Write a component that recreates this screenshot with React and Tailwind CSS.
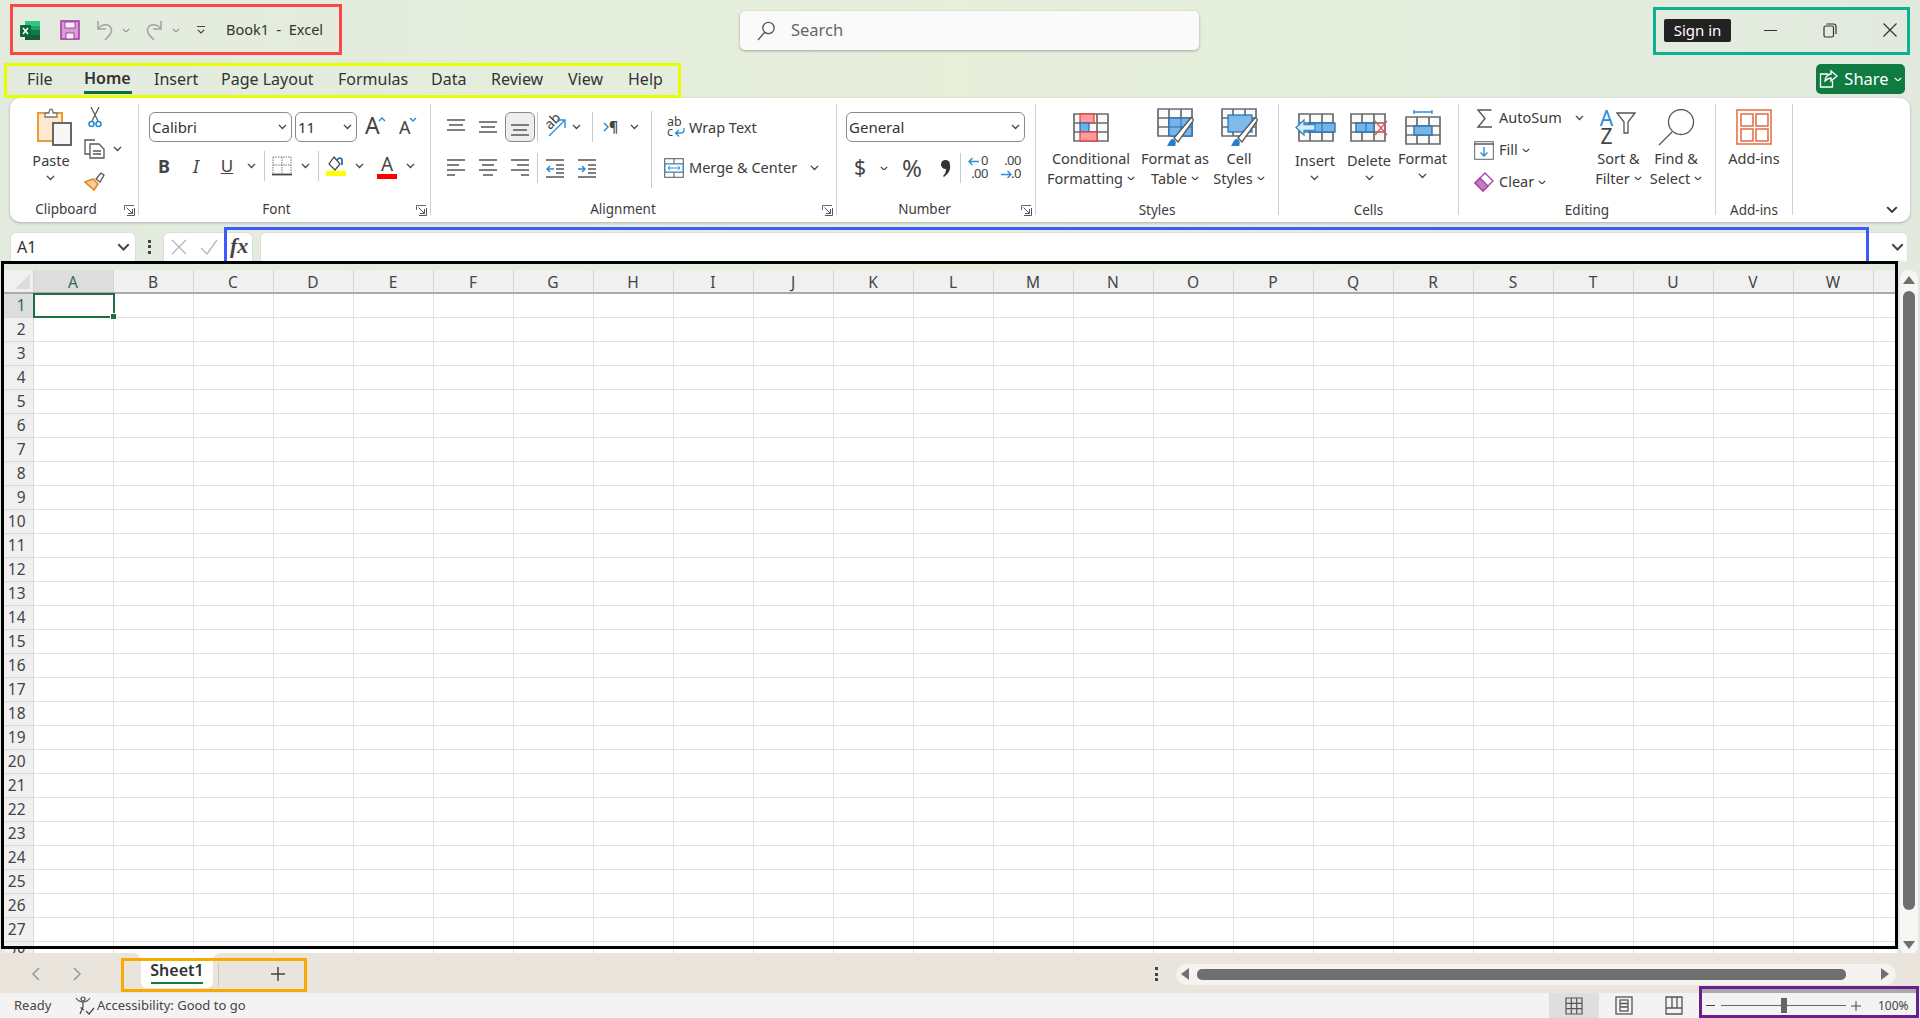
import React from 'react';

const COLS = 'ABCDEFGHIJKLMNOPQRSTUVW'.split('');
const ROWS = Array.from({ length: 28 }, (_, i) => i + 1);

const Chev = ({ c = '#444', w = 9 }) => (
  <svg width={w} height={w * 0.6} viewBox="0 0 10 6" fill="none"><path d="M1 1l4 4 4-4" stroke={c} strokeWidth="1.5" /></svg>
);

// cell that centres one thing in a fixed width
const Cell = ({ className, children }) => <div className={`flex items-center justify-center shrink-0 ${className}`}>{children}</div>;

const Sep = ({ className = 'h-[30px]' }) => <div className={`w-px shrink-0 bg-[#c9c9c9] ${className}`} />;

const Launcher = () => (
  <svg width="11" height="11" viewBox="0 0 11 11" fill="none" className="shrink-0">
    <path d="M.5 5V.5H10M.5 .5" stroke="#666" /><path d="M2.5 2.5l6 6M4 8.5h4.5V4M10.5 3v7.5H3" stroke="#555" />
  </svg>
);

function Group({ className, label, labelClass = '', launcher, low, children }) {
  return (
    <div className={`shrink-0 h-[111px] flex flex-col border-r border-[#cfcfcf] ${className}`}>
      <div className="h-[97px] shrink-0">{children}</div>
      <div className={`flex items-center h-[18px] shrink-0 ${low ? 'mt-[1px]' : ''}`}>
        <span className={`flex-1 text-center text-[13.5px] text-[#3b3b3b] leading-none ${labelClass}`}>{label}</span>
        {launcher && <div className="mr-[3px] ml-[2px]"><Launcher /></div>}
      </div>
    </div>
  );
}

function Big({ className, icon, lines, caretOnly, low }) {
  return (
    <div className={`shrink-0 flex flex-col items-center pt-[4px] ${className}`}>
      <div className="h-[38px] flex items-center justify-center">{icon}</div>
      <div className={`${low ? 'mt-[4px]' : 'mt-[2px]'} text-[14.5px] leading-[20px] text-[#3b3b3b] text-center whitespace-nowrap`}>
        {lines.map((l, i) => (
          <div key={i} className="flex items-center justify-center gap-[4px]">
            {l}
            {!caretOnly && i === lines.length - 1 && <Chev w={8} />}
          </div>
        ))}
        {caretOnly && <div className="flex justify-center h-[16px] items-center"><Chev /></div>}
      </div>
    </div>
  );
}

const Combo = ({ className, text }) => (
  <div className={`h-[30px] shrink-0 flex items-center justify-between pl-[2px] pr-[4px] border border-[#8a8a8a] rounded-[6px] ${className}`}>
    <span className="text-[15px] text-[#333]">{text}</span>
    <Chev />
  </div>
);

const Lines = ({ rows, c = '#555' }) => (
  <svg width="19" height="19" viewBox="0 0 19 19" fill="none" stroke={c} strokeWidth="1.5">
    {rows.map((d, i) => <path key={i} d={d} />)}
  </svg>
);

/* ---- drawn icons ---- */
const ExcelLogo = () => (
  <svg width="21" height="21" viewBox="0 0 21 21">
    <rect x="5" y="1" width="15" height="19" rx="1.5" fill="#21a366" />
    <rect x="5" y="1" width="15" height="5" fill="#33c481" />
    <rect x="5" y="10" width="15" height="5" fill="#107c41" />
    <rect x="5" y="15" width="15" height="5" fill="#185c37" />
    <rect x="0" y="5" width="11" height="12" rx="1" fill="#0b6a38" />
    <path d="M3 8l5 6M8 8l-5 6" stroke="#fff" strokeWidth="1.6" />
  </svg>
);
const Save = () => (
  <svg width="20" height="20" viewBox="0 0 20 20">
    <rect x="1" y="1" width="18" height="18" fill="#d79fd8" stroke="#a63ea6" strokeWidth="1.6" />
    <rect x="5" y="2" width="10" height="6" fill="#fbf5fb" stroke="#a63ea6" />
    <rect x="6" y="13" width="8" height="6" fill="#fbf5fb" stroke="#a63ea6" />
  </svg>
);
const Undo = ({ flip }) => (
  <svg width="20" height="21" viewBox="0 0 20 21" fill="none" stroke="#a3a3a3" strokeWidth="1.5" className={flip ? '-scale-x-100' : ''}>
    <path d="M3 1v8h8M3 9c3-5 11-6 13-1 2 4-2 8-6 12" />
  </svg>
);
const SearchIco = () => (
  <svg width="20" height="20" viewBox="0 0 20 20" fill="none" stroke="#555" strokeWidth="1.3"><circle cx="12.5" cy="7" r="5.7" /><path d="M8.5 11.5L2 19" /></svg>
);
const Restore = () => (
  <svg width="14" height="15" viewBox="0 0 14 15" fill="none" stroke="#333" strokeWidth="1.2"><rect x="1" y="3" width="9.5" height="11" rx="1.5" /><path d="M3.5 1h7a2.5 2.5 0 012.5 2.5V11" /></svg>
);
const ShareIco = () => (
  <svg width="20" height="20" viewBox="0 0 20 20" fill="none" stroke="#fff" strokeWidth="1.3"><path d="M9 5H1.5v13h12v-6" /><path d="M6 12c0-4 3-7 6-7V2l6 5-6 5V9c-2 0-4 1-6 3z" /></svg>
);
const PasteIco = () => (
  <svg width="35" height="38" viewBox="0 0 35 38" className="ml-[6px]">
    <rect x="1" y="5" width="24" height="28" fill="#fde9cd" stroke="#ee9a35" strokeWidth="2" />
    <path d="M8 9V5h4c0-5 4-5 4 0h4v4z" fill="#fff" stroke="#777" strokeWidth="1.3" />
    <rect x="16" y="15" width="18" height="22" fill="#f7f7f7" stroke="#666" strokeWidth="2" />
  </svg>
);
const CutIco = () => (
  <svg width="14" height="21" viewBox="0 0 14 21" fill="none"><path d="M3 0l7 14M11 0L4 14" stroke="#555" strokeWidth="1.2" /><circle cx="3.5" cy="17" r="2.5" stroke="#2a8dd4" strokeWidth="1.6" /><circle cx="10.5" cy="17" r="2.5" stroke="#2a8dd4" strokeWidth="1.6" /></svg>
);
const CopyIco = () => (
  <svg width="21" height="20" viewBox="0 0 21 20" fill="none" stroke="#555" strokeWidth="1.3"><path d="M11 1H1v14h5" /><path d="M6 5h9l5 5v9H6z" fill="#fff" /><path d="M9 12h8M9 15h8" /></svg>
);
const PainterIco = () => (
  <svg width="21" height="20" viewBox="0 0 21 20"><path d="M1 11l8-3 5 5-4 6z" fill="#f8cf9a" stroke="#e9831c" strokeWidth="1.6" /><path d="M12 8l5-6 3 2-4 7z" fill="#fff" stroke="#555" strokeWidth="1.3" /></svg>
);
const BorderIco = () => (
  <svg width="20" height="20" viewBox="0 0 20 20" fill="none" stroke="#777" strokeWidth="1"><path d="M1 1h18M1 1v16M19 1v16M10 1v16M1 9h18" strokeDasharray="1.5 1" /><path d="M0 18.5h20" stroke="#444" strokeWidth="1.8" /></svg>
);
const FillIco = () => (
  <div className="flex flex-col items-center">
    <svg width="18" height="15" viewBox="0 0 18 15" fill="none"><path d="M7 1l6 7-5 6-6-6z" stroke="#444" strokeWidth="1.2" /><path d="M10 4c2-3 5-2 5 0v5" stroke="#1f6fb5" strokeWidth="1.8" /></svg>
    <div className="w-[20px] h-[5px] bg-[#ffff00]" />
  </div>
);
const Orient = () => (
  <div className="relative w-[21px] h-[20px]">
    <span className="absolute left-[-1px] top-[-3px] -rotate-45 text-[14px] leading-none text-[#444]">ab</span>
    <svg width="21" height="20" viewBox="0 0 21 20" fill="none" className="absolute inset-0" stroke="#2a8dd4" strokeWidth="1.4"><path d="M4 19L19 4M12 3h8v8" /></svg>
  </div>
);
const Indent = ({ inc }) => (
  <svg width="18" height="19" viewBox="0 0 18 19" fill="none" strokeWidth="1.5">
    <path d="M0 1h18M10 6h8M10 10h8M10 14h8M0 18h18" stroke="#555" />
    <path d={inc ? 'M0 10h7M4 7l3 3-3 3' : 'M1 10h7M4 7l-3 3 3 3'} stroke="#2a8dd4" />
  </svg>
);
const WrapIco = () => (
  <div className="relative w-[18px] h-[22px] text-[#444] text-[12.5px] leading-[10px]">
    <div>ab</div><div>c</div>
    <svg width="12" height="10" viewBox="0 0 12 10" fill="none" stroke="#2a8dd4" strokeWidth="1.3" className="absolute left-[7px] bottom-[1px]"><path d="M10 0v2a3 3 0 01-3 3H2M5 2L1.5 5 5 8.5" /></svg>
  </div>
);
const MergeIco = () => (
  <svg width="20" height="20" viewBox="0 0 20 20" fill="none"><rect x=".7" y=".7" width="18.6" height="18.6" stroke="#555" /><path d="M.7 6h18.6M.7 14h18.6M10 1v5M10 14v5" stroke="#555" /><rect x="1" y="6" width="18" height="8" fill="#fff" stroke="#2a8dd4" /><path d="M4 10h12M6 8l-2 2 2 2M14 8l2 2-2 2" stroke="#2a8dd4" /></svg>
);
const DecIco = ({ inc }) => (
  <div className="relative w-[20px] h-[28px] text-[13px] leading-[13px] tracking-[-0.5px] text-[#444] text-right">
    <div>{inc ? '0' : '.00'}</div>
    <div>{inc ? '.00' : '.0'}</div>
    <svg width="11" height="9" viewBox="0 0 11 9" fill="none" stroke="#2a8dd4" strokeWidth="1.3" className={`absolute left-0 ${inc ? 'top-[3px]' : 'top-[16px]'}`}>
      <path d={inc ? 'M11 4.5H1M4.5 1L1 4.5 4.5 8' : 'M0 4.5h10M6.5 1L10 4.5 6.5 8'} />
    </svg>
  </div>
);
const CommaIco = () => (
  <svg width="11" height="17" viewBox="0 0 11 17" fill="#333"><circle cx="5.5" cy="4.5" r="4.5" /><path d="M10 5c1 5-2 9-6 12l-1-1c2-2 3-4 3-7z" /></svg>
);
const G = '#6b6b6b';
const Frame = () => <path d="M1 1h34v27H1zM12 1v27M24 1v27M1 10h34M1 19h34" fill="#fafafa" stroke={G} strokeWidth="1.7" />;
const CondIco = () => (
  <svg width="36" height="29" viewBox="0 0 36 29"><Frame />
    <rect x="7" y="1" width="14" height="9" fill="#ff9a9f" stroke="#e53935" strokeWidth="1.2" />
    <rect x="7" y="10" width="9" height="9" fill="#6fb1e4" stroke="#1f6fb5" strokeWidth="1.2" />
    <rect x="7" y="19" width="17" height="9" fill="#ff9a9f" stroke="#e53935" strokeWidth="1.2" />
  </svg>
);
const Brush = () => (
  <g><path d="M18 38c-5 1-8-1-9 0 3-1 3-6 6-7 3 0 5 3 3 7z" fill="#2a7fc4" /><path d="M17 30L33 11c2-2 4 0 3 2L21 34z" fill="#fff" stroke="#555" strokeWidth="1.3" /></g>
);
const TableIco = () => (
  <svg width="40" height="38" viewBox="0 0 40 38" className="ml-[4px]"><Frame />
    <rect x="12" y="10" width="23" height="18" fill="#77b5e8" stroke="#1f6fb5" strokeWidth="1.2" /><path d="M24 10v18M12 19h23" stroke="#1f6fb5" />
    <Brush />
  </svg>
);
const CellIco = () => (
  <svg width="40" height="38" viewBox="0 0 40 38" className="ml-[4px]"><Frame />
    <rect x="7" y="7" width="24" height="17" fill="#7ebbec" stroke="#1f6fb5" strokeWidth="1.2" />
    <Brush />
  </svg>
);
const InsertIco = () => (
  <svg width="41" height="29" viewBox="0 0 41 29" className="ml-[1px]"><g transform="translate(3 0)"><Frame /></g>
    <rect x="14" y="10" width="26" height="9" fill="#77b5e8" stroke="#1f6fb5" strokeWidth="1.3" /><path d="M27 10v9" stroke="#1f6fb5" />
    <path d="M1 14.5L9 7v4.5h11v6H9V22z" fill="#d9ecfa" stroke="#2a8dd4" strokeWidth="1.3" />
  </svg>
);
const DeleteIco = () => (
  <svg width="38" height="29" viewBox="0 0 38 29"><Frame />
    <rect x="6" y="10" width="18" height="9" fill="#77b5e8" stroke="#1f6fb5" strokeWidth="1.3" /><path d="M16 10v9" stroke="#1f6fb5" />
    <path d="M25 8l12 14M37 8L25 22" stroke="#f05252" strokeWidth="1.4" />
  </svg>
);
const FormatIco = () => (
  <svg width="36" height="36" viewBox="0 0 36 36"><g transform="translate(0 7)"><Frame /></g>
    <path d="M9 3h18M9 1v4M27 1v4" stroke="#2a8dd4" strokeWidth="1.3" fill="none" />
    <rect x="9" y="17" width="18" height="9" fill="#77b5e8" stroke="#1f6fb5" strokeWidth="1.3" />
  </svg>
);
const Sigma = () => (
  <svg width="17" height="19" viewBox="0 0 17 19" fill="none" stroke="#555" strokeWidth="1.4"><path d="M15.5 1H2l7 8.5L2 18h14" /></svg>
);
const FillDown = () => (
  <svg width="20" height="19" viewBox="0 0 20 19" fill="none"><rect x=".7" y=".7" width="18.6" height="17.6" fill="#fff" stroke="#666" /><path d="M0 3h20" stroke="#666" strokeWidth="1.6" /><path d="M10 6v9M6.5 11.5L10 15l3.5-3.5" stroke="#2a8dd4" strokeWidth="1.4" /></svg>
);
const Eraser = () => (
  <svg width="20" height="20" viewBox="0 0 20 20"><path d="M11 1l8 8-10 10-8-8z" fill="#fff" stroke="#a63ea6" strokeWidth="1.3" /><path d="M6 6l8 8-5 5-8-8z" fill="#c17cc4" stroke="#a63ea6" strokeWidth="1.3" /></svg>
);
const SortIco = () => (
  <div className="flex items-center w-[38px] h-[36px]">
    <div className="flex flex-col items-center text-[21px] leading-[18px] w-[14px]">
      <span className="text-[#2a8dd4]">A</span><span className="text-[#444]">Z</span>
    </div>
    <svg width="20" height="22" viewBox="0 0 20 22" fill="none" stroke="#555" strokeWidth="1.3" className="ml-[2px] mt-[-8px]"><path d="M1 1h18l-7 9v11H8V10z" /></svg>
  </div>
);
const FindIco = () => (
  <svg width="38" height="37" viewBox="0 0 38 37" fill="none" stroke="#555" strokeWidth="1.3"><circle cx="24" cy="13" r="12.5" fill="#fff" /><path d="M15 23L2 36" /></svg>
);
const AddinsIco = () => (
  <svg width="36" height="36" viewBox="0 0 36 36" fill="none" stroke="#e2693f" strokeWidth="1.5"><rect x="1" y="1" width="34" height="34" /><rect x="5" y="5" width="12" height="12" /><rect x="20" y="5" width="12" height="12" /><rect x="5" y="20" width="12" height="12" /><rect x="20" y="20" width="12" height="12" /></svg>
);
const Dots = () => (
  <div className="flex flex-col gap-[2.5px]">
    <div className="w-[3px] h-[3px] bg-[#444]" /><div className="w-[3px] h-[3px] bg-[#444]" /><div className="w-[3px] h-[3px] bg-[#444]" />
  </div>
);
const AccessIco = () => (
  <svg width="21" height="20" viewBox="0 0 21 20" fill="none" stroke="#444" strokeWidth="1.2"><circle cx="8" cy="3" r="2" /><path d="M1 2c2 3 4 4 7 4s5-1 7-4M8 6v5M8 11l-3 7M5.5 11.5L9 14" /><path d="M11 15l3 3 5-6" /></svg>
);

function Ribbon() {
  const row2 = 'flex items-center h-[28px]';
  return (
    <div className="h-[124px] mx-[10px] shrink-0 bg-white rounded-[10px] shadow-[0_1px_3px_rgba(0,0,0,0.25)] flex pt-[6px]">
      <Group className="w-[129px]" label="Clipboard" launcher>
        <div className="flex">
          <Big className="w-[48px] ml-[17px]" icon={<PasteIco />} lines={['Paste']} caretOnly low />
          <div className="flex flex-col gap-[12px] ml-[9px] mt-[3px]">
            <Cell className="w-[21px] h-[20px]"><CutIco /></Cell>
            <div className="flex items-center h-[20px]"><CopyIco /><div className="ml-[8px]"><Chev /></div></div>
            <Cell className="w-[21px] h-[20px]"><PainterIco /></Cell>
          </div>
        </div>
      </Group>

      <Group className="w-[292px]" label="Font" launcher>
        <div className="flex items-center ml-[10px] mt-[8px] gap-[3px]">
          <Combo className="w-[143px]" text="Calibri" />
          <Combo className="w-[62px]" text="11" />
          <div className="relative ml-[5px] w-[21px] h-[30px] text-[23px] leading-[26px] text-[#444]">A
            <svg width="8" height="5" viewBox="0 0 8 5" fill="none" className="absolute right-0 top-[5px]" stroke="#2a8dd4" strokeWidth="1.4"><path d="M1 4l3-3 3 3" /></svg>
          </div>
          <div className="relative ml-[10px] w-[18px] h-[30px] text-[18px] leading-[30px] text-[#444]">A
            <svg width="8" height="5" viewBox="0 0 8 5" fill="none" className="absolute right-0 top-[5px]" stroke="#2a8dd4" strokeWidth="1.4"><path d="M1 1l3 3 3-3" /></svg>
          </div>
        </div>
        <div className={`${row2} ml-[10px] mt-[10px]`}>
          <Cell className="w-[30px] text-[18px] font-bold text-[#444]">B</Cell>
          <Cell className="w-[34px] text-[18px] italic text-[#444]">I</Cell>
          <Cell className="w-[28px] text-[17px] underline text-[#444]">U</Cell>
          <Cell className="w-[20px]"><Chev /></Cell>
          <Sep className="h-[30px] ml-[3px]" />
          <div className="ml-[7px]"><BorderIco /></div>
          <Cell className="w-[26px]"><Chev /></Cell>
          <Sep />
          <Cell className="w-[20px] ml-[7px]"><FillIco /></Cell>
          <Cell className="w-[26px]"><Chev /></Cell>
          <div className="w-[30px] flex flex-col items-center">
            <span className="text-[19px] leading-[20px] text-[#444]">A</span>
            <div className="w-[20px] h-[5px] bg-[#ff0000]" />
          </div>
          <Cell className="w-[16px]"><Chev /></Cell>
        </div>
      </Group>

      <Group className="w-[406px]" label="Alignment" labelClass="pr-[5px]" launcher>
        <div className="flex">
          <div className="w-[220px] shrink-0">
            <div className="flex items-center ml-[9px] mt-[8px] h-[30px]">
              <Cell className="w-[32px]"><Lines rows={['M0 2h18M2 7h14M0 12h18']} /></Cell>
              <Cell className="w-[32px]"><Lines rows={['M0 4h18M2 9h14M0 14h18']} /></Cell>
              <Cell className="w-[32px]">
                <div className="w-[30px] h-[30px] flex items-center justify-center bg-[#eeeeee] border border-[#888] rounded-[6px]"><Lines rows={['M0 7h18M2 12h14M0 17h18']} /></div>
              </Cell>
              <Sep className="h-[30px] ml-[1px]" />
              <div className="ml-[7px]"><Orient /></div>
              <Cell className="w-[20px]"><Chev /></Cell>
              <Sep className="h-[30px] ml-[6px]" />
              <div className="ml-[10px] w-[17px] flex items-center text-[14px] font-bold leading-none text-[#444]">
                <svg width="6" height="10" viewBox="0 0 6 10" fill="none" stroke="#2a8dd4" strokeWidth="1.5"><path d="M1 1l4 4-4 4" /></svg>¶
              </div>
              <Cell className="w-[28px]"><Chev /></Cell>
            </div>
            <div className={`${row2} ml-[9px] mt-[12px]`}>
              <Cell className="w-[32px]"><Lines rows={['M0 1h18M0 6h12M0 11h18M0 16h8']} /></Cell>
              <Cell className="w-[32px]"><Lines rows={['M0 1h18M3 6h12M0 11h18M4 16h10']} /></Cell>
              <Cell className="w-[32px]"><Lines rows={['M0 1h18M6 6h12M0 11h18M10 16h8']} /></Cell>
              <Sep className="h-[30px] ml-[1px]" />
              <Cell className="w-[20px] ml-[7px]"><Indent /></Cell>
              <Cell className="w-[20px] ml-[12px]"><Indent inc /></Cell>
            </div>
          </div>
          <Sep className="h-[77px] mt-[7px]" />
          <div className="text-[14.5px] text-[#3b3b3b]">
            <div className="flex items-center h-[30px] mt-[9px] ml-[15px]">
              <WrapIco /><span className="ml-[4px]">Wrap Text</span>
            </div>
            <div className="flex items-center h-[30px] mt-[10px] ml-[12px]">
              <MergeIco /><span className="ml-[5px] w-[121px] whitespace-nowrap">Merge &amp; Center</span><Chev />
            </div>
          </div>
        </div>
      </Group>

      <Group className="w-[199px]" label="Number" labelClass="pr-[7px]" launcher>
        <div className="ml-[9px] mt-[8px]"><Combo className="w-[179px]" text="General" /></div>
        <div className={`${row2} ml-[9px] mt-[12px]`}>
          <Cell className="w-[28px] text-[21px] text-[#444]">$</Cell>
          <Cell className="w-[20px]"><Chev w={8} /></Cell>
          <Cell className="w-[36px] text-[24px] text-[#444]">%</Cell>
          <Cell className="w-[30px]"><CommaIco /></Cell>
          <Sep className="h-[30px]" />
          <div className="ml-[7px]"><DecIco inc /></div>
          <div className="ml-[13px]"><DecIco /></div>
        </div>
      </Group>

      <Group className="w-[243px]" label="Styles" low>
        <div className="flex">
          <Big className="w-[110px]" icon={<CondIco />} lines={['Conditional', 'Formatting']} />
          <Big className="w-[58px]" icon={<TableIco />} lines={['Format as', 'Table']} />
          <Big className="w-[70px]" icon={<CellIco />} lines={['Cell', 'Styles']} />
        </div>
      </Group>

      <Group className="w-[180px]" label="Cells" low>
        <div className="flex">
          <Big className="w-[72px]" icon={<InsertIco />} lines={['Insert']} caretOnly low />
          <Big className="w-[36px]" icon={<DeleteIco />} lines={['Delete']} caretOnly low />
          <Big className="w-[71px]" icon={<FormatIco />} lines={['Format']} caretOnly />
        </div>
      </Group>

      <Group className="w-[257px]" label="Editing" low>
        <div className="flex">
          <div className="w-[131px] shrink-0 flex flex-col gap-[12px] mt-[4px] pl-[15px] text-[14.5px] text-[#3b3b3b]">
            <div className="flex items-center h-[20px]"><Cell className="w-[20px]"><Sigma /></Cell><span className="ml-[5px] w-[76px]">AutoSum</span><Chev /></div>
            <div className="flex items-center h-[20px]"><Cell className="w-[20px]"><FillDown /></Cell><span className="ml-[5px] mr-[4px]">Fill</span><Chev w={8} /></div>
            <div className="flex items-center h-[20px]"><Cell className="w-[20px]"><Eraser /></Cell><span className="ml-[5px] mr-[4px]">Clear</span><Chev w={8} /></div>
          </div>
          <Big className="w-[57px]" icon={<SortIco />} lines={['Sort &', 'Filter']} />
          <Big className="w-[58px]" icon={<FindIco />} lines={['Find &', 'Select']} />
        </div>
      </Group>

      <Group className="w-[77px]" label="Add-ins" low>
        <div className="flex flex-col items-center pt-[4px]">
          <div className="h-[38px] flex items-center"><AddinsIco /></div>
          <div className="mt-[2px] text-[14.5px] leading-[20px] text-[#3b3b3b]">Add-ins</div>
        </div>
      </Group>

      <div className="flex-1 flex items-end justify-end pr-[12px] pb-[9px]"><Chev c="#333" w={12} /></div>
    </div>
  );
}

function Sheet() {
  return (
    <div className="w-[1893px] h-[683px] shrink-0 ml-[4px] overflow-hidden bg-white rounded-tl-[4px]">
      <div className="flex h-[24px] bg-[#f0f0f0] border-b-2 border-[#ababab]">
        <div className="w-[29.5px] shrink-0 flex items-end justify-end pr-[3px] pb-[3px] border-r border-[#d4d4d4]">
          <div className="w-0 h-0 border-b-[15px] border-l-[15px] border-b-[#dcdcdc] border-l-transparent" />
        </div>
        {COLS.map((c) => (
          <div key={c} className={`w-[80px] shrink-0 flex items-center justify-center pt-[3px] text-[15.5px] border-r border-[#d4d4d4] ${c === 'A' ? 'bg-[#dddddd] text-[#2e6b4b]' : 'text-[#444]'}`}>{c}</div>
        ))}
      </div>
      {ROWS.map((r) => (
        <div key={r} className="flex h-[24px]">
          <div className={`w-[29.5px] shrink-0 flex items-center justify-end pr-[7px] pt-[1px] text-[15.5px] border-b border-r border-[#d9d9d9] ${r === 1 ? 'bg-[#dddddd] text-[#2e6b4b]' : 'bg-[#f0f0f0] text-[#444]'}`}>{r}</div>
          {COLS.map((c) => (
            <div key={c} className="relative w-[80px] shrink-0 border-b border-r border-[#e1e1e1]">
              {r === 1 && c === 'A' && (
                <div className="absolute z-10 -left-[1px] -top-[1px] w-[82px] h-[25px] border-2 border-[#1e6f43]">
                  <div className="absolute -right-[3px] -bottom-[3px] w-[6px] h-[6px] bg-[#1e6f43] border-l border-t border-white" />
                </div>
              )}
            </div>
          ))}
          <div className="flex-1 border-b border-[#e1e1e1]" />
        </div>
      ))}
    </div>
  );
}

export default function App() {
  return (
    <div className="relative w-[1920px] h-[1018px] overflow-hidden flex flex-col bg-linear-to-r from-[#e2ebde] via-[#e7efdb] to-[#e2eadf] font-['Noto_Sans',sans-serif] text-[#333]">
      {/* title bar */}
      <div className="h-[63px] shrink-0 flex items-start">
        <div className="flex items-center h-[60px] pl-[20px] w-[740px] shrink-0">
          <ExcelLogo />
          <div className="ml-[19px]"><Save /></div>
          <div className="ml-[15px]"><Undo /></div>
          <Cell className="w-[12px] ml-[5px] opacity-50"><Chev w={8} /></Cell>
          <div className="ml-[12px]"><Undo flip /></div>
          <Cell className="w-[12px] ml-[6px] opacity-50"><Chev w={8} /></Cell>
          <div className="ml-[15px] flex flex-col items-center gap-[2px]"><div className="w-[8px] h-px bg-[#444]" /><Chev w={8} /></div>
          <span className="ml-[21px] text-[14.5px] whitespace-pre text-[#333]">Book1  -  Excel</span>
        </div>
        <div className="w-[459px] h-[39px] mt-[11px] shrink-0 bg-[#fafafa] rounded-[5px] shadow-[0_1px_3px_rgba(0,0,0,0.3)] flex items-center pl-[16px]">
          <SearchIco /><span className="ml-[15px] text-[16.5px] text-[#666]">Search</span>
        </div>
        <div className="flex-1 flex items-center justify-end h-[60px]">
          <div className="w-[67px] h-[23px] bg-[#222] rounded-[2px] text-white text-[15px] flex items-center justify-center">Sign in</div>
          <Cell className="w-[13px] ml-[33px]"><div className="w-[13px] h-px bg-[#333]" /></Cell>
          <Cell className="w-[14px] ml-[46px]"><Restore /></Cell>
          <svg width="14" height="14" viewBox="0 0 14 14" stroke="#333" strokeWidth="1.2" className="ml-[46px] mr-[23px]"><path d="M.5.5l13 13M13.5.5l-13 13" /></svg>
        </div>
      </div>

      {/* tabs */}
      <div className="h-[35px] shrink-0 flex items-start">
        <div className="flex pl-[27px] text-[16px] h-[32px]">
          {[['File', 'w-[57px]'], ['Home', 'w-[70px]'], ['Insert', 'w-[67px]'], ['Page Layout', 'w-[117px]'], ['Formulas', 'w-[93px]'], ['Data', 'w-[60px]'], ['Review', 'w-[77px]'], ['View', 'w-[60px]'], ['Help', 'w-[40px]']].map(([t, w]) => (
            <div key={t} className={`${w} shrink-0 h-full flex flex-col justify-center`}>
              <span className={`whitespace-nowrap ${t === 'Home' ? 'font-semibold w-[48px] mt-[2px] border-b-[3px] border-[#0f6b3a] pb-[1px]' : ''}`}>{t}</span>
            </div>
          ))}
        </div>
        <div className="ml-auto mr-[15px] mt-[1px] w-[89px] h-[30px] bg-[#0f7b41] rounded-[5px] flex items-center justify-center gap-[5px] text-white text-[16.5px]">
          <ShareIco />Share<Chev c="#fff" w={8} />
        </div>
      </div>

      <Ribbon />

      {/* formula bar */}
      <div className="h-[29px] mt-[10px] shrink-0 flex ml-[10px]">
        <div className="w-[126px] shrink-0 bg-white border border-b-0 border-[#ddd] rounded-t-[6px] flex items-center justify-between pl-[6px] pr-[5px] text-[16px]">A1<Chev c="#444" w={13} /></div>
        <Cell className="w-[27px]"><Dots /></Cell>
        <div className="w-[90px] shrink-0 bg-white border border-b-0 border-[#ddd] rounded-t-[6px] flex items-center pl-[7px]">
          <svg width="16" height="16" viewBox="0 0 16 16" stroke="#b5b5b5" strokeWidth="1.3"><path d="M1 1l14 14M15 1L1 15" /></svg>
          <svg width="18" height="16" viewBox="0 0 18 16" stroke="#b5b5b5" strokeWidth="1.3" fill="none" className="ml-[13px]"><path d="M1 9l6 6L17 1" /></svg>
          <span className="ml-[12px] -mt-[2px] font-['Liberation_Serif',serif] italic font-bold text-[22px] leading-none text-[#444]">fx</span>
        </div>
        <div className="ml-[7px] flex-1 mr-[12px] bg-white border border-b-0 border-[#ddd] rounded-t-[6px] flex items-center justify-end pr-[3px]"><Chev c="#444" w={13} /></div>
      </div>

      {/* sheet + scrollbar */}
      <div className="mt-[9px] h-[683px] shrink-0 flex">
        <Sheet />
        <div className="ml-[3px] w-[18px] h-[685px] shrink-0 bg-[#f6f6f4] rounded-full flex flex-col items-center py-[6px]">
          <div className="w-0 h-0 border-x-[6px] border-x-transparent border-b-[8px] border-b-[#6f6f6f]" />
          <div className="w-[12px] h-[619px] mt-[7px] bg-[#6f6f6f] rounded-[6px]" />
          <div className="mt-auto w-0 h-0 border-x-[6px] border-x-transparent border-t-[8px] border-t-[#6f6f6f]" />
        </div>
      </div>

      {/* sheet tabs */}
      <div className="h-[40px] shrink-0 flex bg-white">
        <div className="w-[141px] shrink-0 bg-[#e9e5dd] rounded-tr-[8px] flex items-center pl-[31px] pt-[2px]">
          <svg width="10" height="16" viewBox="0 0 10 16" fill="none" stroke="#999" strokeWidth="1.5"><path d="M8 2L2 8l6 6" /></svg>
          <svg width="10" height="16" viewBox="0 0 10 16" fill="none" stroke="#999" strokeWidth="1.5" className="ml-[31px]"><path d="M2 2l6 6-6 6" /></svg>
        </div>
        <div className="w-[72px] shrink-0 bg-[#e9e5dd]">
          <div className="h-[35px] bg-white rounded-b-[6px] flex flex-col items-center pt-[6px]">
            <span className="text-[16px] leading-[22px] font-semibold text-[#333]">Sheet1</span>
            <div className="w-[52px] h-[2px] mt-[1px] bg-[#107c41]" />
          </div>
        </div>
        <div className="flex-1 bg-[#e9e5dd] rounded-tl-[8px] flex items-center pt-[2px]">
          <Sep className="h-[23px] ml-[5px] bg-[#bbb]" />
          <svg width="16" height="16" viewBox="0 0 16 16" stroke="#444" strokeWidth="1.5" className="ml-[51px]"><path d="M8 1v14M1 8h14" /></svg>
          <div className="ml-auto"><Dots /></div>
          <div className="ml-[18px] mr-[24px] w-[720px] h-[21px] bg-[#f5f3ef] rounded-full flex items-center px-[5px]">
            <div className="w-0 h-0 border-y-[6px] border-y-transparent border-r-[8px] border-r-[#6f6f6f]" />
            <div className="ml-[8px] w-[649px] h-[11px] bg-[#6f6f6f] rounded-[5px]" />
            <div className="ml-auto mr-[2px] w-0 h-0 border-y-[6px] border-y-transparent border-l-[8px] border-l-[#6f6f6f]" />
          </div>
        </div>
      </div>

      {/* status bar */}
      <div className="h-[25px] shrink-0 bg-[#f3f3f3] flex items-center text-[13px] text-[#444]">
        <span className="ml-[14px] w-[61px]">Ready</span>
        <AccessIco />
        <span className="ml-[1px]">Accessibility: Good to go</span>
        <Cell className="ml-auto w-[50px] h-full bg-[#dedede]">
          <svg width="18" height="18" viewBox="0 0 18 18" fill="none" stroke="#555" strokeWidth="1.2"><path d="M1 1h16v16H1zM6.3 1v16M11.7 1v16M1 6.3h16M1 11.7h16" /></svg>
        </Cell>
        <Cell className="w-[50px]">
          <svg width="18" height="19" viewBox="0 0 18 19" fill="none" stroke="#555" strokeWidth="1.3"><rect x="1" y="1" width="16" height="17" /><rect x="5" y="4" width="8" height="11" /><path d="M5 7.5h8M5 11h8" /></svg>
        </Cell>
        <Cell className="w-[49px] mr-[1px]">
          <svg width="18" height="19" viewBox="0 0 18 19" fill="none" stroke="#555" strokeWidth="1.3"><path d="M1 1h16v17H1zM1 12h16M7 1v11M12 1v11" /></svg>
        </Cell>
        <div className="w-[221px] shrink-0 flex items-center text-[12px]">
          <div className="w-[9px] h-[1.5px] bg-[#444] ml-[7px]" />
          <div className="relative w-[125px] h-px bg-[#666] ml-[6px]">
            <div className="absolute left-[60px] -top-[7px] w-[6px] h-[15px] bg-[#666]" />
          </div>
          <svg width="10" height="10" viewBox="0 0 10 10" stroke="#444" className="ml-[5px]"><path d="M5 0v10M0 5h10" /></svg>
          <span className="ml-[17px]">100%</span>
        </div>
      </div>

      {/* annotation boxes drawn over the screenshot */}
      <div className="absolute left-[10px] top-[4px] w-[332px] h-[51px] border-[3px] border-[#fb4747]" />
      <div className="absolute left-[4px] top-[63px] w-[677px] h-[35px] border-[3px] border-[#e5ff00]" />
      <div className="absolute left-[1653px] top-[7px] w-[257px] h-[48px] border-[3px] border-[#0db192]" />
      <div className="absolute left-[224px] top-[227px] w-[1645px] h-[35px] border-[3px] border-b-0 border-[#3d5afe]" />
      <div className="absolute left-[1px] top-[261px] w-[1897px] h-[688px] border-[3px] border-black" />
      <div className="absolute left-[121px] top-[958px] w-[186px] h-[34px] border-[3px] border-[#f8aa00]" />
      <div className="absolute left-[1699px] top-[986px] w-[220px] h-[32px] border-[3px] border-[#6a1f8f]">
        <div className="h-[4px] bg-[#aaaaaa]" />
      </div>
    </div>
  );
}
